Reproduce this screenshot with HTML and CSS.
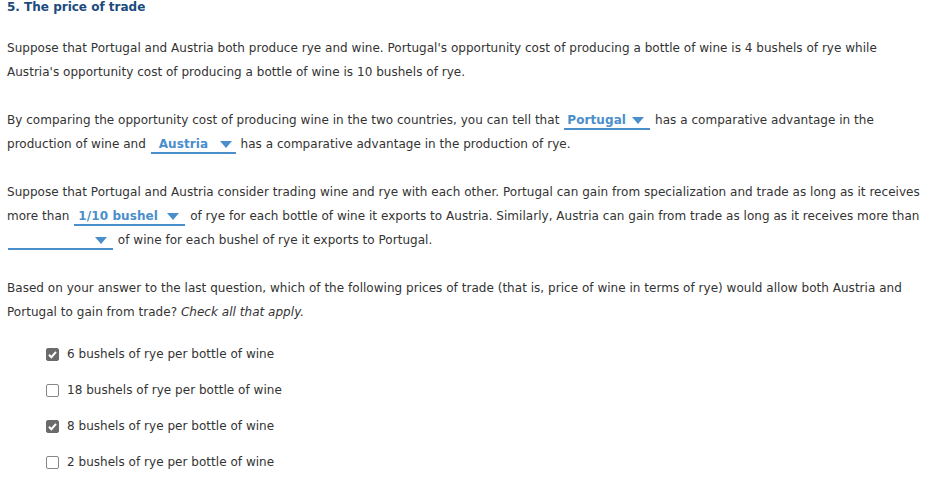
FILE: index.html
```html
<!DOCTYPE html>
<html>
<head>
<meta charset="utf-8">
<link rel="stylesheet" href="styles.css">
</head>
<body>
<div class="page">
  <h1 class="title">5. The price of trade</h1>
  <p class="para">Suppose that Portugal and Austria both produce rye and wine. Portugal's opportunity cost of producing a bottle of wine is 4 bushels of rye while Austria's opportunity cost of producing a bottle of wine is 10 bushels of rye.</p>
  <p class="para">By comparing the opportunity cost of producing wine in the two countries, you can tell that <span class="dd dd-portugal"><span class="dd-text">Portugal</span><span class="arrow"></span></span> has a comparative advantage in the production of wine and <span class="dd dd-austria"><span class="dd-text">Austria</span><span class="arrow"></span></span> has a comparative advantage in the production of rye.</p>
  <p class="para">Suppose that Portugal and Austria consider trading wine and rye with each other. Portugal can gain from specialization and trade as long as it receives more than <span class="dd dd-bushel"><span class="dd-text">1/10 bushel</span><span class="arrow"></span></span> of rye for each bottle of wine it exports to Austria. Similarly, Austria can gain from trade as long as it receives more than <span class="dd dd-empty"><span class="dd-text">&nbsp;</span><span class="arrow"></span></span> of wine for each bushel of rye it exports to Portugal.</p>
  <p class="para">Based on your answer to the last question, which of the following prices of trade (that is, price of wine in terms of rye) would allow both Austria and Portugal to gain from trade? <em>Check all that apply.</em></p>
  <ul class="choices">
    <li class="choice"><span class="box checked"><svg viewBox="0 0 13 13" width="13" height="13"><path d="M3 6.8 L5.4 9.2 L10 3.8" fill="none" stroke="#fff" stroke-width="2"/></svg></span>6 bushels of rye per bottle of wine</li>
    <li class="choice"><span class="box"></span>18 bushels of rye per bottle of wine</li>
    <li class="choice"><span class="box checked"><svg viewBox="0 0 13 13" width="13" height="13"><path d="M3 6.8 L5.4 9.2 L10 3.8" fill="none" stroke="#fff" stroke-width="2"/></svg></span>8 bushels of rye per bottle of wine</li>
    <li class="choice"><span class="box"></span>2 bushels of rye per bottle of wine</li>
  </ul>
</div>
</body>
</html>
```
FILE: styles.css
```css
html, body {
  margin: 0;
  padding: 0;
  background: #fff;
}
.page {
  padding: 0 7px;
  font-family: "DejaVu Sans", Verdana, sans-serif;
  font-size: 12px;
  letter-spacing: 0.03px;
  color: #333;
}
.title {
  margin: 0;
  font-size: 12px;
  letter-spacing: 0;
  line-height: 14px;
  font-weight: bold;
  color: #1a4b7d;
}
.para {
  margin: 22px 0 0;
  line-height: 24px;
}
.para + .para {
  margin-top: 24px;
}
.dd {
  display: inline-flex;
  box-sizing: border-box;
  align-items: center;
  justify-content: space-between;
  border-bottom: 2px solid #4a8ecb;
  padding: 0 6px 0 3px;
  line-height: 16px;
  vertical-align: baseline;
  margin: 0 1px;
}
.dd-text {
  color: #4a8ecb;
  font-weight: bold;
  letter-spacing: 0.1px;
}
.arrow {
  width: 0;
  height: 0;
  border-left: 6px solid transparent;
  border-right: 6px solid transparent;
  border-top: 7px solid #4a8ecb;
}
.dd-portugal { width: 86px; }
.dd-austria { width: 85px; padding-left: 8px; padding-right: 4px; }
.dd-bushel { width: 111px; padding-left: 4px; }
.dd-empty { width: 105px; }
.choices {
  list-style: none;
  margin: 21px 0 0;
  padding: 0 0 0 39px;
  display: flex;
  flex-direction: column;
  gap: 18px;
}
.choice {
  display: flex;
  align-items: center;
  line-height: 18px;
}
.box {
  width: 11px;
  height: 11px;
  border: 1px solid #888;
  border-radius: 2px;
  margin-right: 8px;
  display: inline-flex;
  align-items: center;
  justify-content: center;
  flex: none;
}
.box.checked {
  background: #6b6b6b;
  border-color: #6b6b6b;
}
.box svg {
  display: block;
  flex: none;
}
```
